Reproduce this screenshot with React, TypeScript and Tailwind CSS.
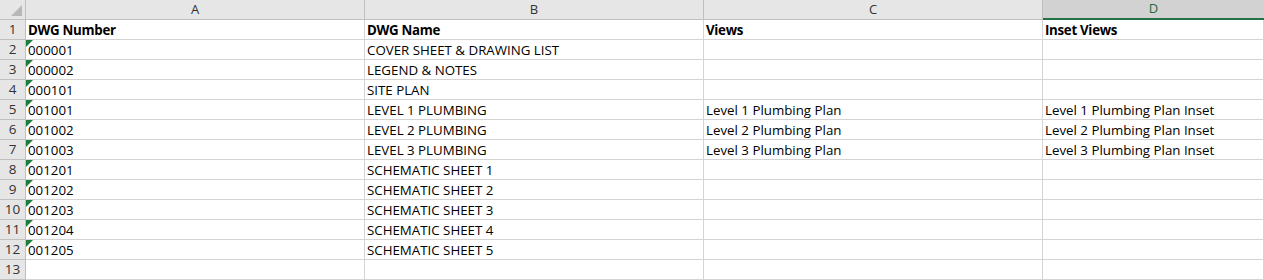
import React from "react";

const rows: string[][] = [
  ["DWG Number", "DWG Name", "Views", "Inset Views"],
  ["000001", "COVER SHEET & DRAWING LIST", "", ""],
  ["000002", "LEGEND & NOTES", "", ""],
  ["000101", "SITE PLAN", "", ""],
  ["001001", "LEVEL 1 PLUMBING", "Level 1 Plumbing Plan", "Level 1 Plumbing Plan Inset"],
  ["001002", "LEVEL 2 PLUMBING", "Level 2 Plumbing Plan", "Level 2 Plumbing Plan Inset"],
  ["001003", "LEVEL 3 PLUMBING", "Level 3 Plumbing Plan", "Level 3 Plumbing Plan Inset"],
  ["001201", "SCHEMATIC SHEET 1", "", ""],
  ["001202", "SCHEMATIC SHEET 2", "", ""],
  ["001203", "SCHEMATIC SHEET 3", "", ""],
  ["001204", "SCHEMATIC SHEET 4", "", ""],
  ["001205", "SCHEMATIC SHEET 5", "", ""],
  ["", "", "", ""],
];

const cols = ["A", "B", "C", "D"];

export default function App() {
  return (
    <div
      className="w-[1264px] h-[280px] overflow-hidden bg-white text-[13.3px] text-black"
      style={{ fontFamily: "'Open Sans', 'Noto Sans', sans-serif" }}
    >
      <div className="grid grid-cols-[26px_339px_339px_339px_1fr]">
        <div className="relative h-[20px] bg-[#e6e6e6] border-r border-b border-[#bfbfbf]">
          <div className="absolute right-[3px] bottom-[3px] w-0 h-0 border-l-[11px] border-l-transparent border-b-[11px] border-b-[#b7b7b7]" />
        </div>
        {cols.map((c, i) =>
          i === 3 ? (
            <div
              key={c}
              className="h-[20px] bg-[#d2d2d2] border-b-2 border-[#217346] flex items-center justify-center text-[13px] text-[#1e6b41]"
            >
              {c}
            </div>
          ) : (
            <div
              key={c}
              className="h-[20px] bg-[#e6e6e6] border-r border-b border-[#bfbfbf] flex items-center justify-center text-[13px] text-[#333]"
            >
              {c}
            </div>
          )
        )}
        {rows.map((r, ri) => (
          <React.Fragment key={ri}>
            <div className="h-[20px] bg-[#e6e6e6] border-r border-b border-[#bfbfbf] flex items-end justify-center text-[13.5px] text-[#333] leading-[19px]">
              {ri + 1}
            </div>
            {r.map((v, ci) => (
              <div
                key={ci}
                className={`relative h-[20px] border-r border-b border-[#d4d4d4] pl-[2px] pt-[1px] leading-[18px] whitespace-nowrap overflow-hidden ${
                  ri === 0 ? "font-bold tracking-[-0.3px]" : ""
                }`}
              >
                {ci === 0 && ri > 0 && v !== "" && (
                  <div className="absolute left-0 top-0 w-0 h-0 border-t-[7px] border-t-[#1d7a3a] border-r-[7px] border-r-transparent" />
                )}
                {v}
              </div>
            ))}
          </React.Fragment>
        ))}
      </div>
    </div>
  );
}
